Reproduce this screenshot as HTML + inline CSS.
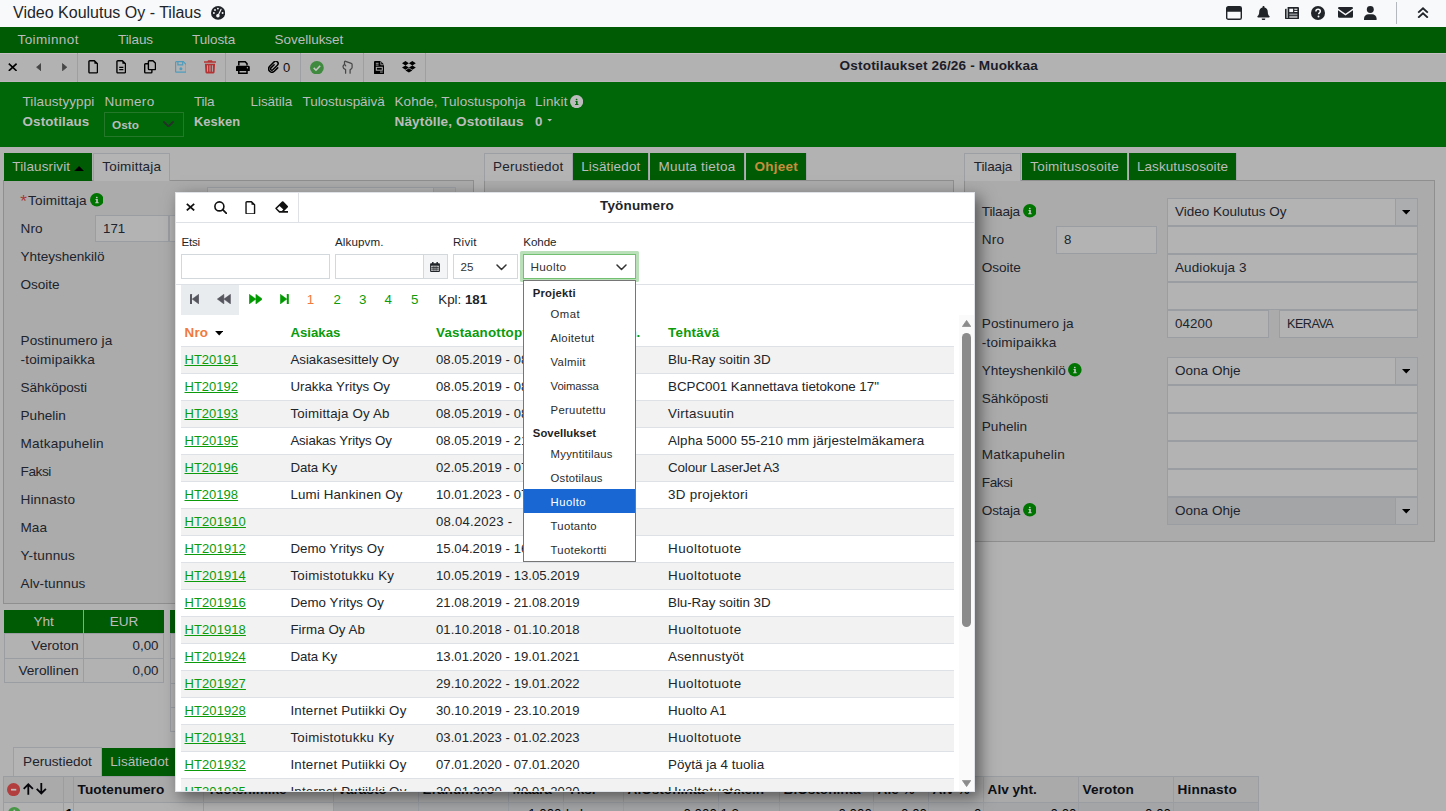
<!DOCTYPE html>
<html lang="fi"><head><meta charset="utf-8"><title>Video Koulutus Oy - Tilaus</title>
<style>
html,body{margin:0;padding:0}
body{width:1446px;height:811px;overflow:hidden;position:relative;background:#b2b2b2;font-family:"Liberation Sans",sans-serif;}
.r{position:absolute;box-sizing:border-box;display:block}
.t{position:absolute;white-space:nowrap;line-height:20px;height:20px}
a{color:inherit}
</style></head><body>

<div class="r" style="left:0px;top:0px;width:1446px;height:27px;background:#f8f9fa;"></div>
<div class="t" style="top:3px;font-size:16px;color:#212529;left:13px;">Video Koulutus Oy - Tilaus</div>
<svg class="r" style="left:210.9px;top:5.9px;" width="14.2" height="13.8" viewBox="0 0 14.200 13.800"><ellipse cx="7.100" cy="6.900" rx="7.100" ry="6.900" fill="#212529"/><circle cx="2.900" cy="7" r=".95" fill="#f8f9fa"/><circle cx="4" cy="4" r=".95" fill="#f8f9fa"/><circle cx="6.900" cy="2.600" r=".95" fill="#f8f9fa"/><circle cx="11.600" cy="7" r=".95" fill="#f8f9fa"/><path d="M10 3.400 L7.100 9.400" stroke="#f8f9fa" stroke-width="1.200" stroke-linecap="round"/><circle cx="6.900" cy="9.700" r="1.750" fill="#f8f9fa"/></svg>
<svg class="r" style="left:1226px;top:6px;" width="16" height="14" viewBox="0 0 16 14"><rect x=".7" y=".7" width="14.6" height="12.6" rx="1.6" fill="none" stroke="#212529" stroke-width="1.4"/><path d="M.7 2.2 a1.5 1.5 0 0 1 1.5 -1.5 h11.6 a1.5 1.5 0 0 1 1.5 1.5 v3.6 h-14.6 z" fill="#212529"/></svg>
<svg class="r" style="left:1256.5px;top:5.6px;" width="13" height="14.4" viewBox="0 0 13 14.4"><path d="M6.5 0 c.6 0 1 .4 1 1 v.5 c2 .5 3.300 2.200 3.300 4.400 c0 2.300 .7 3.300 1.600 4.200 c.5 .5 .2 1.400 -.6 1.400 h-10.6 c-.8 0 -1.100 -.9 -.6 -1.400 c.9 -.9 1.600 -1.900 1.600 -4.200 c0 -2.200 1.300 -3.900 3.300 -4.400 v-.5 c0 -.6 .4 -1 1 -1 z M4.700 12.500 h3.600 a1.800 1.800 0 0 1 -3.600 0 z" fill="#212529"/></svg>
<svg class="r" style="left:1285px;top:6.6px;" width="14" height="12.4" viewBox="0 0 14 12.4"><path d="M2.600 0 h10.400 a1 1 0 0 1 1 1 v10.200 a1.200 1.200 0 0 1 -1.200 1.200 h-11.300 a1.500 1.500 0 0 1 -1.500 -1.500 v-8.400 a.8 .8 0 0 1 .8 -.8 h.8 v8.900 a.5 .5 0 0 0 1 0 z" fill="#212529"/><rect x="4.300" y="1.700" width="3.800" height="3.400" fill="#f8f9fa"/><rect x="9.300" y="1.700" width="3.100" height="1.100" fill="#f8f9fa"/><rect x="9.300" y="3.900" width="3.100" height="1.100" fill="#f8f9fa"/><rect x="4.300" y="6.500" width="8.100" height="1.800" fill="#8a8d90"/><rect x="4.300" y="9.400" width="8.100" height="1.200" fill="#f8f9fa"/></svg>
<svg class="r" style="left:1311.3px;top:5.8px;" width="14" height="14" viewBox="0 0 14 14"><circle cx="7" cy="7" r="7" fill="#212529"/><path d="M4.900 5.400 c0 -1.300 1 -2.100 2.200 -2.100 c1.300 0 2.200 .8 2.200 1.900 c0 1.700 -1.700 1.700 -1.700 3.100" fill="none" stroke="#f8f9fa" stroke-width="1.500"/><circle cx="7.500" cy="10.400" r="1" fill="#f8f9fa"/></svg>
<svg class="r" style="left:1337.6px;top:7.4px;" width="15" height="10.8" viewBox="0 0 15 10.8"><path d="M1.200 0 h12.600 a1.200 1.200 0 0 1 1.200 1.200 v.4 l-7.500 5.200 l-7.500 -5.200 v-.4 a1.200 1.200 0 0 1 1.200 -1.200 z M0 3.200 l7.500 5.200 l7.500 -5.200 v6.400 a1.200 1.200 0 0 1 -1.200 1.200 h-12.600 a1.200 1.200 0 0 1 -1.200 -1.200 z" fill="#212529"/></svg>
<svg class="r" style="left:1364.4px;top:5.8px;" width="12.6" height="14.2" viewBox="0 0 12.600 14.200"><circle cx="6.300" cy="3.500" r="3.500" fill="#212529"/><path d="M0 14.200 v-1.600 c0 -2.700 2.100 -4.400 4.500 -4.400 h3.600 c2.400 0 4.500 1.700 4.500 4.400 v1.600 z" fill="#212529"/></svg>
<div class="r" style="left:1396px;top:2px;width:1px;height:22px;background:#b5b9bd;"></div>
<svg class="r" style="left:1416.5px;top:6.6px;" width="12" height="11.8" viewBox="0 0 12 11.800"><path d="M1.200 5.700 L6 1.300 L10.800 5.700 M1.200 10.700 L6 6.300 L10.800 10.700" fill="none" stroke="#212529" stroke-width="1.800" stroke-linejoin="miter"/></svg>
<div class="r" style="left:0px;top:27px;width:1446px;height:26px;background:#005b05;"></div>
<div class="t" style="top:30px;font-size:13.5px;color:#bcbcbc;letter-spacing:0.392px;left:17.5px;">Toiminnot</div>
<div class="t" style="top:30px;font-size:13.5px;color:#bcbcbc;letter-spacing:-0.085px;left:118px;">Tilaus</div>
<div class="t" style="top:30px;font-size:13.5px;color:#bcbcbc;letter-spacing:-0.081px;left:192px;">Tulosta</div>
<div class="t" style="top:30px;font-size:13.5px;color:#bcbcbc;letter-spacing:-0.021px;left:274.5px;">Sovellukset</div>
<div class="r" style="left:0px;top:53px;width:1446px;height:29px;background:#b2b2b2;"></div>
<div class="r" style="left:0px;top:53px;width:1446px;height:1px;background:#c5bec3;"></div>
<div class="r" style="left:0px;top:81px;width:1446px;height:1px;background:#bab6ba;"></div>
<div class="r" style="left:77px;top:53px;width:1px;height:29px;background:#9c9fa3;"></div>
<div class="r" style="left:225px;top:53px;width:1px;height:29px;background:#9c9fa3;"></div>
<div class="r" style="left:300px;top:53px;width:1px;height:29px;background:#9c9fa3;"></div>
<div class="r" style="left:363px;top:53px;width:1px;height:29px;background:#9c9fa3;"></div>
<div class="r" style="left:425px;top:53px;width:1px;height:29px;background:#9c9fa3;"></div>
<svg class="r" style="left:8px;top:62.7px;" width="9.4" height="8.6" viewBox="0 0 9.400 8.600"><path d="M.8 .7 L8.600 7.900 M8.600 .7 L.8 7.900" stroke="#000" stroke-width="1.600" fill="none"/></svg>
<svg class="r" style="left:35.8px;top:62.9px;" width="5.4" height="8.4" viewBox="0 0 5.400 8.400"><path d="M5 .6 v7.200 l-4.400 -3.600 z" fill="#464646" stroke="#464646" stroke-width=".8" stroke-linejoin="round"/></svg>
<svg class="r" style="left:62.4px;top:62.9px;" width="5.4" height="8.4" viewBox="0 0 5.400 8.400"><path d="M.4 .6 v7.200 l4.400 -3.600 z" fill="#464646" stroke="#464646" stroke-width=".8" stroke-linejoin="round"/></svg>
<svg class="r" style="left:87.8px;top:60.3px;" width="10.4" height="13.6" viewBox="0 0 10 13.700"><path d="M1.6 .7 h4.6 l3.1 3.1 v8.3 a.9 .9 0 0 1 -.9 .9 h-6.8 a.9 .9 0 0 1 -.9 -.9 v-10.5 a.9 .9 0 0 1 .9 -.9 z" fill="none" stroke="#000" stroke-width="1.4" stroke-linejoin="round"/><path d="M6.2 .7 v3.1 h3.1 z" fill="#000"/></svg>
<svg class="r" style="left:115.9px;top:60.3px;" width="10.4" height="13.6" viewBox="0 0 10 13.700"><path d="M1.6 .7 h4.6 l3.1 3.1 v8.3 a.9 .9 0 0 1 -.9 .9 h-6.8 a.9 .9 0 0 1 -.9 -.9 v-10.5 a.9 .9 0 0 1 .9 -.9 z" fill="none" stroke="#000" stroke-width="1.4" stroke-linejoin="round"/><path d="M6.2 .7 v3.1 h3.1 z" fill="#000"/><path d="M3 7.4 h4.2 M3 9.8 h4.2" stroke="#000" stroke-width="1.3"/></svg>
<svg class="r" style="left:144px;top:60.3px;" width="12.2" height="13.6" viewBox="0 0 12.200 13.600"><path d="M5.200 .7 h3.800 l2.500 2.500 v5.600 a.8 .8 0 0 1 -.8 .8 h-5.500 a.8 .8 0 0 1 -.8 -.8 v-7.300 a.8 .8 0 0 1 .8 -.8 z" fill="none" stroke="#000" stroke-width="1.400" stroke-linejoin="round"/><path d="M4.300 3.800 h-2.800 a.8 .8 0 0 0 -.8 .8 v7.500 a.8 .8 0 0 0 .8 .8 h5.600 a.8 .8 0 0 0 .8 -.8 v-2.400" fill="none" stroke="#000" stroke-width="1.400" stroke-linejoin="round"/></svg>
<svg class="r" style="left:174.5px;top:61px;" width="11.8" height="11.8" viewBox="0 0 11.800 11.800"><path d="M1.400 .6 h6.900 l2.900 2.900 v6.900 a.8 .8 0 0 1 -.8 .8 h-9 a.8 .8 0 0 1 -.8 -.8 v-9 a.8 .8 0 0 1 .8 -.8 z" fill="none" stroke="#4f9cbd" stroke-width="1.200"/><path d="M2.900 .8 v3 h4.800 v-3" fill="none" stroke="#4f9cbd" stroke-width="1.200"/><circle cx="5.900" cy="7.700" r="1.500" fill="#4f9cbd"/></svg>
<svg class="r" style="left:204px;top:60.3px;" width="12" height="13.6" viewBox="0 0 11.800 13"><path d="M4 0 h3.800 l.6 1 h3 a.4 .4 0 0 1 .4 .4 v.8 a.4 .4 0 0 1 -.4 .4 h-11 a.4 .4 0 0 1 -.4 -.4 v-.8 a.4 .4 0 0 1 .4 -.4 h3 z" fill="#b63333"/><path d="M.9 3.400 h10 l-.5 8.500 a1.200 1.200 0 0 1 -1.200 1.100 h-6.600 a1.200 1.200 0 0 1 -1.200 -1.100 z" fill="#b63333"/><path d="M3.500 5 v6.300 M5.900 5 v6.300 M8.300 5 v6.300" stroke="#b2b2b2" stroke-width=".9"/></svg>
<svg class="r" style="left:236px;top:60.5px;" width="13.8" height="13" viewBox="0 0 13.800 13"><path d="M2.800 4.600 v-3.800 h6.400 l1.800 1.800 v2" fill="none" stroke="#000" stroke-width="1.500"/><path d="M1.400 4.800 h11 a1.400 1.400 0 0 1 1.400 1.400 v3.300 a.5 .5 0 0 1 -.5 .5 h-12.800 a.5 .5 0 0 1 -.5 -.5 v-3.300 a1.400 1.400 0 0 1 1.400 -1.400 z" fill="#000"/><path d="M2.800 9 v3.300 h8.200 v-3.300" fill="none" stroke="#000" stroke-width="1.500"/><circle cx="11.400" cy="6.700" r=".7" fill="#b2b2b2"/></svg>
<svg class="r" style="left:267.8px;top:61px;" width="11.6" height="12.4" viewBox="0 0 11.600 12.400"><path d="M6.100 3.700 L2.900 6.900 a1.300 1.300 0 0 0 1.900 1.900 L9.400 4.200 a2.300 2.300 0 0 0 -3.300 -3.300 L1.500 5.500 a3.400 3.400 0 0 0 4.800 4.800 L9.700 6.900" fill="none" stroke="#000" stroke-width="1.500" stroke-linecap="round"/></svg>
<div class="t" style="top:58px;font-size:13px;color:#101010;left:283px;">0</div>
<svg class="r" style="left:310px;top:60.5px;" width="13.8" height="13.4" viewBox="0 0 13.800 13.400"><ellipse cx="6.900" cy="6.700" rx="6.900" ry="6.700" fill="#3f8a3f"/><path d="M3.700 6.900 L6 9.200 L10.200 4.700" fill="none" stroke="#c6c6c6" stroke-width="1.600"/></svg>
<svg class="r" style="left:342px;top:60px;" width="11" height="14" viewBox="342 60 11 14"><path d="M345.600 73.200 V69.700 C344.400 69.200 343 68.300 343 66.800 C343 65.600 343.800 65 344.500 64.400 V61.900 C344.500 61.300 345 61.100 345.600 61.300 L351.300 63.400 C351.900 63.600 352.100 64 352.100 64.600 V67.500 C352.100 68.600 351 69.200 350.100 69.800 V73.200 M344.500 64.400 C345 64.900 345.500 65.300 345.700 65.900" fill="none" stroke="#484848" stroke-width="1.250" stroke-linecap="round" stroke-linejoin="round"/></svg>
<svg class="r" style="left:373.6px;top:60.6px;" width="10.6" height="13.2" viewBox="0 0 10.600 13.200"><path d="M1 0 h5.600 l4 4 v8.200 a1 1 0 0 1 -1 1 h-8.600 a1 1 0 0 1 -1 -1 v-11.200 a1 1 0 0 1 1 -1 z" fill="#000"/><path d="M6.800 .4 v3.400 h3.400" fill="none" stroke="#b2b2b2" stroke-width=".8"/><rect x="1.800" y="1.800" width="2.800" height=".9" fill="#b2b2b2"/><rect x="1.800" y="3.600" width="2.800" height=".9" fill="#b2b2b2"/><rect x="2.300" y="6.300" width="6" height="2.900" fill="none" stroke="#b2b2b2" stroke-width="1"/><rect x="6" y="10.600" width="2.800" height=".9" fill="#b2b2b2"/></svg>
<svg class="r" style="left:402px;top:61.4px;" width="13.8" height="11.4" viewBox="0 0 13.800 11.400"><path d="M3.450 0 L6.900 2.200 L3.450 4.400 L0 2.200 z M10.350 0 L13.800 2.200 L10.350 4.400 L6.900 2.200 z M3.450 4.400 L6.900 6.600 L3.450 8.800 L0 6.600 z M10.350 4.400 L13.800 6.600 L10.350 8.800 L6.900 6.600 z M3.450 9.500 L6.900 7.300 L10.350 9.500 L6.900 11.400 z" fill="#000"/></svg>
<div class="t" style="top:56px;font-size:13.6px;color:#1c1c28;font-weight:700;letter-spacing:0.143px;left:839.6px;">Ostotilaukset 26/26 - Muokkaa</div>
<div class="r" style="left:0px;top:82px;width:1446px;height:65px;background:#006708;"></div>
<div class="t" style="top:92px;font-size:13.5px;color:#bcbcbc;letter-spacing:0.094px;left:22.5px;">Tilaustyyppi</div>
<div class="t" style="top:92px;font-size:13.5px;color:#bcbcbc;letter-spacing:0.331px;left:104.5px;">Numero</div>
<div class="t" style="top:92px;font-size:13.5px;color:#bcbcbc;letter-spacing:-0.213px;left:194px;">Tila</div>
<div class="t" style="top:92px;font-size:13.5px;color:#bcbcbc;letter-spacing:-0.053px;left:250.5px;">Lisätila</div>
<div class="t" style="top:92px;font-size:13.5px;color:#bcbcbc;letter-spacing:-0.045px;left:302.5px;">Tulostuspäivä</div>
<div class="t" style="top:92px;font-size:13.5px;color:#bcbcbc;letter-spacing:0.058px;left:394.5px;">Kohde, Tulostuspohja</div>
<div class="t" style="top:92px;font-size:13.5px;color:#bcbcbc;letter-spacing:0.198px;left:535px;">Linkit</div>
<svg class="r" style="left:570.2px;top:94.8px;" width="13.2" height="13.2" viewBox="0 0 13 13"><circle cx="6.500" cy="6.500" r="6.500" fill="#bcbcbc"/><rect x="5.700" y="3.700" width="1.600" height="1.400" rx=".5" fill="#006708"/><path d="M5.300 5.800 h2.200 v3 h.8 v1 h-3.300 v-1 h.9 v-2 h-.6 z" fill="#006708"/></svg>
<div class="t" style="top:112px;font-size:13.4px;color:#bcbcbc;font-weight:700;letter-spacing:0.148px;left:22.5px;">Ostotilaus</div>
<div class="t" style="top:112px;font-size:12.9px;color:#bcbcbc;font-weight:700;letter-spacing:0.051px;left:194px;">Kesken</div>
<div class="t" style="top:112px;font-size:13.6px;color:#bcbcbc;font-weight:700;letter-spacing:0.112px;left:394.5px;">Näytölle, Ostotilaus</div>
<div class="t" style="top:112px;font-size:13.4px;color:#bcbcbc;font-weight:700;left:535px;">0</div>
<svg class="r" style="left:546.6px;top:119.3px;" width="5.4" height="2.6" viewBox="0 0 8 4.300"><path d="M0 0 h8 l-4 4.3 z" fill="#bcbcbc"/></svg>
<div class="r" style="left:104px;top:112px;width:80px;height:25px;border:1px solid #25782a;"></div>
<div class="t" style="top:115px;font-size:11.8px;color:#bcbcbc;font-weight:700;left:112px;">Osto</div>
<svg class="r" style="left:162.6px;top:120.8px;" width="11" height="6.5" viewBox="0 0 11 6.500"><path d="M1 1 L5.5 5.5 L10 1" fill="none" stroke="#26302a" stroke-width="1.8" stroke-linecap="round" stroke-linejoin="round"/></svg>
<div class="r" style="left:3px;top:180px;width:471px;height:424px;background:#ababab;border:1px solid #8f8f8f;"></div>
<div class="r" style="left:484px;top:180px;width:470px;height:450px;background:#ababab;border:1px solid #8f8f8f;"></div>
<div class="r" style="left:964px;top:180px;width:471px;height:362px;background:#ababab;border:1px solid #8f8f8f;"></div>
<div class="r" style="left:4px;top:153px;width:88px;height:27.5px;background:#005b05;"></div>
<div class="t" style="top:157px;font-size:13.5px;color:#bcbcbc;letter-spacing:0.127px;left:12.3px;">Tilausrivit</div>
<svg class="r" style="left:74px;top:166px;" width="10.2" height="5.2" viewBox="0 0 10.200 5.200"><path d="M0 5.200 h10.200 l-5.100 -5.200 z" fill="#000"/></svg>
<div class="r" style="left:93px;top:152.5px;width:77px;height:28.5px;background:#b4b4b4;border:1px solid #9c9fa3;border-bottom:none;"></div>
<div class="t" style="top:157px;font-size:13.5px;color:#20232c;letter-spacing:0.188px;left:102.3px;">Toimittaja</div>
<div class="r" style="left:484px;top:152.5px;width:89px;height:28.5px;background:#b4b4b4;border:1px solid #9c9fa3;border-bottom:none;"></div>
<div class="t" style="top:157px;font-size:13.5px;color:#20232c;letter-spacing:0.183px;left:493.1px;">Perustiedot</div>
<div class="r" style="left:573.3px;top:153px;width:74.70000000000005px;height:27px;background:#005b05;"></div>
<div class="r" style="left:648px;top:153px;width:1px;height:27px;background:#a3a3a8;"></div>
<div class="t" style="top:157px;font-size:13.5px;color:#bcbcbc;letter-spacing:0.151px;left:581.2px;">Lisätiedot</div>
<div class="r" style="left:650px;top:153px;width:94px;height:27px;background:#005b05;"></div>
<div class="r" style="left:744px;top:153px;width:1px;height:27px;background:#a3a3a8;"></div>
<div class="t" style="top:157px;font-size:13.5px;color:#bcbcbc;letter-spacing:0.242px;left:658.4px;">Muuta tietoa</div>
<div class="r" style="left:746px;top:153px;width:60px;height:27px;background:#005b05;"></div>
<div class="r" style="left:806px;top:153px;width:1px;height:27px;background:#a3a3a8;"></div>
<div class="t" style="top:157px;font-size:13.5px;color:#c88e3c;font-weight:700;letter-spacing:0.232px;left:754.5px;">Ohjeet</div>
<div class="r" style="left:964px;top:152.5px;width:56.5px;height:28.5px;background:#b4b4b4;border:1px solid #9c9fa3;border-bottom:none;"></div>
<div class="t" style="top:157px;font-size:13.5px;color:#20232c;letter-spacing:-0.124px;left:973.8px;">Tilaaja</div>
<div class="r" style="left:1022.2px;top:153px;width:105.0px;height:27px;background:#005b05;"></div>
<div class="r" style="left:1127px;top:153px;width:1px;height:27px;background:#a3a3a8;"></div>
<div class="t" style="top:157px;font-size:13.5px;color:#bcbcbc;letter-spacing:0.226px;left:1030.2px;">Toimitusosoite</div>
<div class="r" style="left:1129px;top:153px;width:107.40000000000009px;height:27px;background:#005b05;"></div>
<div class="r" style="left:1236px;top:153px;width:1px;height:27px;background:#a3a3a8;"></div>
<div class="t" style="top:157px;font-size:13.5px;color:#bcbcbc;letter-spacing:0.082px;left:1136.9px;">Laskutusosoite</div>
<div class="t" style="top:192px;font-size:17px;color:#a83a3a;left:20.3px;">*</div>
<div class="t" style="top:191px;font-size:13.6px;color:#20232c;letter-spacing:0.135px;left:28px;">Toimittaja</div>
<svg class="r" style="left:89.6px;top:193.4px;" width="13.6" height="13.6" viewBox="0 0 13 13"><circle cx="6.500" cy="6.500" r="6.500" fill="#007400"/><rect x="5.700" y="3.700" width="1.600" height="1.400" rx=".5" fill="#bfc8bf"/><path d="M5.300 5.800 h2.200 v3 h.8 v1 h-3.300 v-1 h.9 v-2 h-.6 z" fill="#bfc8bf"/></svg>
<div class="r" style="left:207px;top:186.6px;width:249px;height:27px;background:#b3b3b3;border:1px solid #9a9ea2;"></div>
<div class="r" style="left:433px;top:186.6px;width:23px;height:27px;background:#a9a9a9;border:1px solid #9a9ea2;"></div>
<div class="t" style="top:219px;font-size:13.6px;color:#20232c;letter-spacing:0.128px;left:20.5px;">Nro</div>
<div class="t" style="top:247px;font-size:13.6px;color:#20232c;letter-spacing:-0.052px;left:20.5px;">Yhteyshenkilö</div>
<div class="t" style="top:275px;font-size:13.6px;color:#20232c;letter-spacing:-0.068px;left:20.5px;">Osoite</div>
<div class="t" style="top:331px;font-size:13.6px;color:#20232c;letter-spacing:0.085px;left:20.5px;">Postinumero ja</div>
<div class="t" style="top:350px;font-size:13.6px;color:#20232c;letter-spacing:0.17px;left:20.5px;">-toimipaikka</div>
<div class="t" style="top:378px;font-size:13.6px;color:#20232c;letter-spacing:-0.079px;left:20.5px;">Sähköposti</div>
<div class="t" style="top:406px;font-size:13.6px;color:#20232c;left:20.5px;">Puhelin</div>
<div class="t" style="top:434px;font-size:13.6px;color:#20232c;letter-spacing:0.192px;left:20.5px;">Matkapuhelin</div>
<div class="t" style="top:462px;font-size:13.6px;color:#20232c;letter-spacing:-0.399px;left:20.5px;">Faksi</div>
<div class="t" style="top:490px;font-size:13.6px;color:#20232c;letter-spacing:0.115px;left:20.5px;">Hinnasto</div>
<div class="t" style="top:518px;font-size:13.6px;color:#20232c;letter-spacing:0.048px;left:20.5px;">Maa</div>
<div class="t" style="top:546px;font-size:13.6px;color:#20232c;letter-spacing:0.177px;left:20.5px;">Y-tunnus</div>
<div class="t" style="top:574px;font-size:13.6px;color:#20232c;letter-spacing:0.064px;left:20.5px;">Alv-tunnus</div>
<div class="r" style="left:95px;top:214.5px;width:73.5px;height:27px;background:#b3b3b3;border:1px solid #9a9ea2;"></div>
<div class="t" style="top:219px;font-size:13.3px;color:#20232c;left:103px;">171</div>
<div class="r" style="left:168.5px;top:214.5px;width:40px;height:27px;background:#b3b3b3;border:1px solid #9a9ea2;"></div>
<div class="r" style="left:3.6px;top:609.7px;width:80.4px;height:24px;background:#005b05;border-right:1px solid #9a9ea2;"></div>
<div class="r" style="left:84px;top:609.7px;width:80px;height:24px;background:#005b05;"></div>
<div class="t" style="top:612px;font-size:13.6px;color:#bcbcbc;left:-256.4px;width:600px;text-align:center;">Yht</div>
<div class="t" style="top:612px;font-size:13.6px;color:#bcbcbc;left:-176px;width:600px;text-align:center;">EUR</div>
<div class="r" style="left:3.6px;top:633px;width:80.8px;height:25.5px;border:1px solid #9a9ea2;"></div>
<div class="r" style="left:83.4px;top:633px;width:80.6px;height:25.5px;border:1px solid #9a9ea2;"></div>
<div class="r" style="left:3.6px;top:657.5px;width:80.8px;height:25.3px;border:1px solid #9a9ea2;"></div>
<div class="r" style="left:83.4px;top:657.5px;width:80.6px;height:25.3px;border:1px solid #9a9ea2;"></div>
<div class="t" style="top:636px;font-size:13.7px;color:#20232c;left:0;width:78.5px;text-align:right;">Veroton</div>
<div class="t" style="top:661px;font-size:13.7px;color:#20232c;left:0;width:78.5px;text-align:right;">Verollinen</div>
<div class="t" style="top:636px;font-size:13.3px;color:#20232c;left:0;width:158.5px;text-align:right;">0,00</div>
<div class="t" style="top:661px;font-size:13.3px;color:#20232c;left:0;width:158.5px;text-align:right;">0,00</div>
<div class="r" style="left:169.6px;top:609.7px;width:300px;height:24px;background:#005b05;"></div>
<div class="r" style="left:169.6px;top:633px;width:300px;height:25.8px;border:1px solid #9a9ea2;"></div>
<div class="r" style="left:169.6px;top:658px;width:300px;height:25.500000000000046px;border:1px solid #9a9ea2;"></div>
<div class="r" style="left:169.6px;top:682.7px;width:300px;height:25.499999999999932px;border:1px solid #9a9ea2;"></div>
<div class="r" style="left:169.6px;top:707.4px;width:300px;height:25.000000000000046px;border:1px solid #9a9ea2;"></div>
<div class="r" style="left:13px;top:747px;width:89px;height:30px;background:#b4b4b4;border:1px solid #9c9fa3;border-bottom:none;"></div>
<div class="t" style="top:752px;font-size:13.6px;color:#20232c;left:-242.5px;width:600px;text-align:center;">Perustiedot</div>
<div class="r" style="left:102px;top:748.3px;width:90px;height:28px;background:#005b05;"></div>
<div class="t" style="top:752px;font-size:13.6px;color:#bcbcbc;left:110.3px;">Lisätiedot</div>
<div class="r" style="left:3px;top:776px;width:61px;height:27px;background:#aaaaaa;border:1px solid #9a9ea2;"></div>
<div class="r" style="left:3px;top:802px;width:61px;height:27px;background:#b2b2b2;border:1px solid #9a9ea2;"></div>
<div class="r" style="left:63px;top:776px;width:11px;height:27px;background:#aaaaaa;border:1px solid #9a9ea2;"></div>
<div class="r" style="left:63px;top:802px;width:11px;height:27px;background:#b2b2b2;border:1px solid #9a9ea2;"></div>
<div class="r" style="left:73px;top:776px;width:131px;height:27px;background:#aaaaaa;border:1px solid #9a9ea2;"></div>
<div class="r" style="left:73px;top:802px;width:131px;height:27px;background:#b2b2b2;border:1px solid #9a9ea2;"></div>
<div class="t" style="top:780px;font-size:13.6px;color:#0c0e14;font-weight:700;letter-spacing:0.084px;left:77.6px;">Tuotenumero</div>
<div class="r" style="left:203px;top:776px;width:131px;height:27px;background:#aaaaaa;border:1px solid #9a9ea2;"></div>
<div class="r" style="left:203px;top:802px;width:131px;height:27px;background:#b2b2b2;border:1px solid #9a9ea2;"></div>
<div class="t" style="top:780px;font-size:13.6px;color:#0c0e14;font-weight:700;left:207.6px;">Tuotenimike</div>
<div class="r" style="left:333px;top:776px;width:86px;height:27px;background:#aaaaaa;border:1px solid #9a9ea2;"></div>
<div class="r" style="left:333px;top:802px;width:86px;height:27px;background:#a3a5a7;border:1px solid #9a9ea2;"></div>
<div class="t" style="top:780px;font-size:13.6px;color:#0c0e14;font-weight:700;left:337.6px;">Varasto</div>
<div class="r" style="left:418px;top:776px;width:91px;height:27px;background:#aaaaaa;border:1px solid #9a9ea2;"></div>
<div class="r" style="left:418px;top:802px;width:91px;height:27px;background:#a3a5a7;border:1px solid #9a9ea2;"></div>
<div class="t" style="top:780px;font-size:13.6px;color:#0c0e14;font-weight:700;left:422.6px;">Eränumero</div>
<div class="r" style="left:508px;top:776px;width:56px;height:27px;background:#aaaaaa;border:1px solid #9a9ea2;"></div>
<div class="r" style="left:508px;top:802px;width:56px;height:27px;background:#a3a5a7;border:1px solid #9a9ea2;"></div>
<div class="t" style="top:780px;font-size:13.6px;color:#0c0e14;font-weight:700;left:512.6px;">Määrä</div>
<div class="r" style="left:563px;top:776px;width:61px;height:27px;background:#aaaaaa;border:1px solid #9a9ea2;"></div>
<div class="r" style="left:563px;top:802px;width:61px;height:27px;background:#a3a5a7;border:1px solid #9a9ea2;"></div>
<div class="t" style="top:780px;font-size:13.6px;color:#0c0e14;font-weight:700;left:567.6px;">Yks.</div>
<div class="r" style="left:623px;top:776px;width:96px;height:27px;background:#aaaaaa;border:1px solid #9a9ea2;"></div>
<div class="r" style="left:623px;top:802px;width:96px;height:27px;background:#a3a5a7;border:1px solid #9a9ea2;"></div>
<div class="t" style="top:780px;font-size:13.6px;color:#0c0e14;font-weight:700;left:627.6px;">A.Ostohinta</div>
<div class="r" style="left:718px;top:776px;width:62px;height:27px;background:#aaaaaa;border:1px solid #9a9ea2;"></div>
<div class="r" style="left:718px;top:802px;width:62px;height:27px;background:#a3a5a7;border:1px solid #9a9ea2;"></div>
<div class="t" style="top:780px;font-size:13.6px;color:#0c0e14;font-weight:700;left:722.6px;">Oikein</div>
<div class="r" style="left:779px;top:776px;width:95px;height:27px;background:#aaaaaa;border:1px solid #9a9ea2;"></div>
<div class="r" style="left:779px;top:802px;width:95px;height:27px;background:#a3a5a7;border:1px solid #9a9ea2;"></div>
<div class="t" style="top:780px;font-size:13.6px;color:#0c0e14;font-weight:700;left:783.6px;">B.Ostohinta</div>
<div class="r" style="left:873px;top:776px;width:56px;height:27px;background:#aaaaaa;border:1px solid #9a9ea2;"></div>
<div class="r" style="left:873px;top:802px;width:56px;height:27px;background:#a3a5a7;border:1px solid #9a9ea2;"></div>
<div class="t" style="top:780px;font-size:13.6px;color:#0c0e14;font-weight:700;left:877.6px;">Ale %</div>
<div class="r" style="left:928px;top:776px;width:56px;height:27px;background:#aaaaaa;border:1px solid #9a9ea2;"></div>
<div class="r" style="left:928px;top:802px;width:56px;height:27px;background:#a3a5a7;border:1px solid #9a9ea2;"></div>
<div class="t" style="top:780px;font-size:13.6px;color:#0c0e14;font-weight:700;left:932.6px;">Alv %</div>
<div class="r" style="left:983px;top:776px;width:96px;height:27px;background:#aaaaaa;border:1px solid #9a9ea2;"></div>
<div class="r" style="left:983px;top:802px;width:96px;height:27px;background:#a3a5a7;border:1px solid #9a9ea2;"></div>
<div class="t" style="top:780px;font-size:13.6px;color:#0c0e14;font-weight:700;left:987.6px;">Alv yht.</div>
<div class="r" style="left:1078px;top:776px;width:96px;height:27px;background:#aaaaaa;border:1px solid #9a9ea2;"></div>
<div class="r" style="left:1078px;top:802px;width:96px;height:27px;background:#a3a5a7;border:1px solid #9a9ea2;"></div>
<div class="t" style="top:780px;font-size:13.6px;color:#0c0e14;font-weight:700;letter-spacing:0.081px;left:1082.6px;">Veroton</div>
<div class="r" style="left:1173px;top:776px;width:86px;height:27px;background:#aaaaaa;border:1px solid #9a9ea2;"></div>
<div class="r" style="left:1173px;top:802px;width:86px;height:27px;background:#a3a5a7;border:1px solid #9a9ea2;"></div>
<div class="t" style="top:780px;font-size:13.6px;color:#0c0e14;font-weight:700;letter-spacing:0.14px;left:1177.6px;">Hinnasto</div>
<svg class="r" style="left:6.9px;top:782.5px;" width="13.1" height="13.1" viewBox="0 0 13 13"><circle cx="6.500" cy="6.500" r="6.500" fill="#b23e3e"/><rect x="4" y="5.800" width="5.200" height="1.700" fill="#bebebe"/></svg>
<svg class="r" style="left:23px;top:783px;" width="10.6" height="11.8" viewBox="0 0 10.600 11.800"><path d="M5.300 11.800 V1.400 M.7 5.900 L5.300 1.300 L9.900 5.900" fill="none" stroke="#05050a" stroke-width="1.800"/></svg>
<svg class="r" style="left:36px;top:783px;" width="10.6" height="11.8" viewBox="0 0 10.600 11.800"><path d="M5.300 0 V10.400 M.7 5.900 L5.300 10.500 L9.900 5.900" fill="none" stroke="#05050a" stroke-width="1.800"/></svg>
<svg class="r" style="left:8.2px;top:806.6px;" width="12.6" height="12.6" viewBox="0 0 13 13"><circle cx="6.500" cy="6.500" r="6.500" fill="#469646"/><path d="M6.500 2.800 v7.400 M2.800 6.500 h7.400" stroke="#c2c2c2" stroke-width="1.700"/></svg>
<div class="t" style="top:804px;font-size:13.3px;color:#000;font-weight:700;left:65.6px;">1</div>
<div class="t" style="top:804px;font-size:13.3px;color:#000;left:0;width:561.5px;text-align:right;">1,000</div>
<div class="t" style="top:804px;font-size:13.3px;color:#000;left:0;width:716.8px;text-align:right;">0,000</div>
<div class="t" style="top:804px;font-size:13.3px;color:#000;left:0;width:871.8px;text-align:right;">0,000</div>
<div class="t" style="top:804px;font-size:13.3px;color:#000;left:0;width:927px;text-align:right;">0,00</div>
<div class="t" style="top:804px;font-size:13.3px;color:#000;left:0;width:981.5px;text-align:right;">0</div>
<div class="t" style="top:804px;font-size:13.3px;color:#000;left:0;width:1076.5px;text-align:right;">0,00</div>
<div class="t" style="top:804px;font-size:13.3px;color:#000;left:0;width:1171px;text-align:right;">0,00</div>
<div class="t" style="top:804px;font-size:13.3px;color:#000;left:566px;">kpl</div>
<div class="t" style="top:804px;font-size:13.3px;color:#000;left:720.5px;">1,2</div>
<div class="t" style="top:202px;font-size:13.6px;color:#20232c;letter-spacing:-0.194px;left:981.8px;">Tilaaja</div>
<div class="t" style="top:230px;font-size:13.6px;color:#20232c;letter-spacing:0.128px;left:981.8px;">Nro</div>
<div class="t" style="top:258px;font-size:13.6px;color:#20232c;letter-spacing:-0.068px;left:981.8px;">Osoite</div>
<div class="t" style="top:314px;font-size:13.6px;color:#20232c;letter-spacing:0.085px;left:981.8px;">Postinumero ja</div>
<div class="t" style="top:333px;font-size:13.6px;color:#20232c;letter-spacing:0.17px;left:981.8px;">-toimipaikka</div>
<div class="t" style="top:361px;font-size:13.6px;color:#20232c;letter-spacing:-0.052px;left:981.8px;">Yhteyshenkilö</div>
<div class="t" style="top:389px;font-size:13.6px;color:#20232c;letter-spacing:-0.079px;left:981.8px;">Sähköposti</div>
<div class="t" style="top:417px;font-size:13.6px;color:#20232c;left:981.8px;">Puhelin</div>
<div class="t" style="top:445px;font-size:13.6px;color:#20232c;letter-spacing:0.192px;left:981.8px;">Matkapuhelin</div>
<div class="t" style="top:473px;font-size:13.6px;color:#20232c;letter-spacing:-0.399px;left:981.8px;">Faksi</div>
<div class="t" style="top:501px;font-size:13.6px;color:#20232c;letter-spacing:-0.151px;left:981.8px;">Ostaja</div>
<svg class="r" style="left:1022.8px;top:204.2px;" width="13.6" height="13.6" viewBox="0 0 13 13"><circle cx="6.500" cy="6.500" r="6.500" fill="#007400"/><rect x="5.700" y="3.700" width="1.600" height="1.400" rx=".5" fill="#bfc8bf"/><path d="M5.300 5.800 h2.200 v3 h.8 v1 h-3.300 v-1 h.9 v-2 h-.6 z" fill="#bfc8bf"/></svg>
<svg class="r" style="left:1068.4px;top:363.2px;" width="13.6" height="13.6" viewBox="0 0 13 13"><circle cx="6.500" cy="6.500" r="6.500" fill="#007400"/><rect x="5.700" y="3.700" width="1.600" height="1.400" rx=".5" fill="#bfc8bf"/><path d="M5.300 5.800 h2.200 v3 h.8 v1 h-3.300 v-1 h.9 v-2 h-.6 z" fill="#bfc8bf"/></svg>
<svg class="r" style="left:1022.8px;top:503.2px;" width="13.6" height="13.6" viewBox="0 0 13 13"><circle cx="6.500" cy="6.500" r="6.500" fill="#007400"/><rect x="5.700" y="3.700" width="1.600" height="1.400" rx=".5" fill="#bfc8bf"/><path d="M5.300 5.800 h2.200 v3 h.8 v1 h-3.300 v-1 h.9 v-2 h-.6 z" fill="#bfc8bf"/></svg>
<div class="r" style="left:1167px;top:198px;width:251px;height:28px;background:#b3b3b3;border:1px solid #9a9ea2;"></div>
<div class="r" style="left:1395px;top:198px;width:23px;height:28px;background:#acadaf;border:1px solid #9a9ea2;"></div>
<svg class="r" style="left:1402px;top:210px;" width="8.4" height="4.5" viewBox="0 0 8 4.300"><path d="M0 0 h8 l-4 4.3 z" fill="#000"/></svg>
<div class="t" style="top:202px;font-size:13.5px;color:#20232c;left:1175px;">Video Koulutus Oy</div>
<div class="r" style="left:1056px;top:226px;width:101px;height:28px;background:#b3b3b3;border:1px solid #9a9ea2;"></div>
<div class="t" style="top:230px;font-size:13.3px;color:#20232c;left:1064px;">8</div>
<div class="r" style="left:1167px;top:226px;width:251px;height:28px;background:#b3b3b3;border:1px solid #9a9ea2;"></div>
<div class="r" style="left:1167px;top:254px;width:251px;height:28px;background:#b3b3b3;border:1px solid #9a9ea2;"></div>
<div class="t" style="top:258px;font-size:13.5px;color:#20232c;letter-spacing:0.095px;left:1175px;">Audiokuja 3</div>
<div class="r" style="left:1167px;top:282px;width:251px;height:28px;background:#b3b3b3;border:1px solid #9a9ea2;"></div>
<div class="r" style="left:1167px;top:310px;width:102px;height:28px;background:#b3b3b3;border:1px solid #9a9ea2;"></div>
<div class="t" style="top:314px;font-size:13.3px;color:#20232c;letter-spacing:0.123px;left:1175px;">04200</div>
<div class="r" style="left:1279px;top:310px;width:139px;height:28px;background:#b3b3b3;border:1px solid #9a9ea2;"></div>
<div class="t" style="top:314px;font-size:12.6px;color:#20232c;letter-spacing:-0.491px;left:1287px;">KERAVA</div>
<div class="r" style="left:1167px;top:357px;width:251px;height:28px;background:#b3b3b3;border:1px solid #9a9ea2;"></div>
<div class="r" style="left:1395px;top:357px;width:23px;height:28px;background:#acadaf;border:1px solid #9a9ea2;"></div>
<svg class="r" style="left:1402px;top:369px;" width="8.4" height="4.5" viewBox="0 0 8 4.300"><path d="M0 0 h8 l-4 4.3 z" fill="#000"/></svg>
<div class="t" style="top:361px;font-size:13.5px;color:#20232c;letter-spacing:0.023px;left:1175px;">Oona Ohje</div>
<div class="r" style="left:1167px;top:385px;width:251px;height:28px;background:#b3b3b3;border:1px solid #9a9ea2;"></div>
<div class="r" style="left:1167px;top:413px;width:251px;height:28px;background:#b3b3b3;border:1px solid #9a9ea2;"></div>
<div class="r" style="left:1167px;top:441px;width:251px;height:28px;background:#b3b3b3;border:1px solid #9a9ea2;"></div>
<div class="r" style="left:1167px;top:469px;width:251px;height:28px;background:#b3b3b3;border:1px solid #9a9ea2;"></div>
<div class="r" style="left:1167px;top:497px;width:251px;height:28px;background:#a4a5a7;border:1px solid #9a9ea2;"></div>
<div class="r" style="left:1395px;top:497px;width:23px;height:28px;background:#acadaf;border:1px solid #9a9ea2;"></div>
<svg class="r" style="left:1402px;top:509px;" width="8.4" height="4.5" viewBox="0 0 8 4.300"><path d="M0 0 h8 l-4 4.3 z" fill="#000"/></svg>
<div class="t" style="top:501px;font-size:13.5px;color:#20232c;letter-spacing:0.023px;left:1175px;">Oona Ohje</div>
<div class="r" style="left:175px;top:192px;width:800px;height:600px;background:#fff;box-shadow:5px 5px 15px rgba(0,0,0,.5);overflow:hidden;">
<div class="r" style="left:0px;top:30px;width:800px;height:1px;background:#dee2e6;"></div>
<div class="r" style="left:123px;top:0px;width:1px;height:30px;background:#dee2e6;"></div>
<svg class="r" style="left:11.400000000000006px;top:11px;" width="9" height="8.2" viewBox="0 0 9 8.200"><path d="M.8 .8 L8.200 7.400 M8.200 .8 L.8 7.400" stroke="#111" stroke-width="1.800" fill="none"/></svg>
<svg class="r" style="left:38.80000000000001px;top:8.599999999999994px;" width="13.6" height="13.4" viewBox="0 0 13.600 13.400"><circle cx="5.400" cy="5.400" r="4.500" fill="none" stroke="#111" stroke-width="1.600"/><path d="M8.700 8.700 L12.800 12.700" stroke="#111" stroke-width="1.800" stroke-linecap="round"/></svg>
<svg class="r" style="left:70px;top:8.699999999999989px;" width="10.6" height="13.6" viewBox="0 0 10 13.700"><path d="M1.6 .7 h4.6 l3.1 3.1 v8.3 a.9 .9 0 0 1 -.9 .9 h-6.8 a.9 .9 0 0 1 -.9 -.9 v-10.5 a.9 .9 0 0 1 .9 -.9 z" fill="none" stroke="#111" stroke-width="1.4" stroke-linejoin="round"/><path d="M6.2 .7 v3.1 h3.1 z" fill="#111"/></svg>
<svg class="r" style="left:99.80000000000001px;top:9.199999999999989px;" width="13.4" height="11.8" viewBox="0 0 13.400 11.800"><path d="M7 .5 a1 1 0 0 1 1.400 0 l4.400 4.400 a1 1 0 0 1 0 1.400 l-3.700 3.700 h3.900 v1.700 h-8.800 l-3.600 -3.600 a1 1 0 0 1 0 -1.400 z" fill="#111"/><path d="M2 7.400 l2.700 2.700 h2.100 l1.500 -1.500 l-3.700 -3.700 z" fill="#fff"/></svg>
<div class="t" style="top:4px;font-size:13.5px;color:#212529;font-weight:700;letter-spacing:0.166px;left:425px;">Työnumero</div>
<div class="t" style="top:40px;font-size:11.6px;color:#212529;letter-spacing:-0.284px;left:6.5px;">Etsi</div>
<div class="t" style="top:40px;font-size:11.6px;color:#212529;letter-spacing:0.112px;left:160px;">Alkupvm.</div>
<div class="t" style="top:40px;font-size:11.6px;color:#212529;letter-spacing:0.249px;left:278px;">Rivit</div>
<div class="t" style="top:40px;font-size:11.6px;color:#212529;letter-spacing:-0.069px;left:348.29999999999995px;">Kohde</div>
<div class="r" style="left:6px;top:62.400000000000006px;width:148.6px;height:24.4px;background:#fff;border:1px solid #d3d8dd;"></div>
<div class="r" style="left:160px;top:62.400000000000006px;width:89.6px;height:24.4px;background:#fff;border:1px solid #d3d8dd;"></div>
<div class="r" style="left:248px;top:62.400000000000006px;width:24.8px;height:24.4px;background:#f4f5f7;border:1px solid #d3d8dd;"></div>
<svg class="r" style="left:255.2px;top:70px;" width="10" height="10" viewBox="0 0 10.800 11"><path d="M2.200 0 h1.600 v1.300 h3.200 v-1.300 h1.600 v1.300 h1.200 a1 1 0 0 1 1 1 v7.700 a1 1 0 0 1 -1 1 h-8.800 a1 1 0 0 1 -1 -1 v-7.700 a1 1 0 0 1 1 -1 h1.200 z" fill="#212529"/><path d="M1.300 4.100 h8.200 v5.600 h-8.200 z" fill="#fff"/><path d="M1.300 5.950 h8.200 M1.300 7.850 h8.200 M3.350 4.100 v5.600 M5.400 4.100 v5.600 M7.450 4.100 v5.600" stroke="#212529" stroke-width=".9"/></svg>
<div class="r" style="left:278.2px;top:62.400000000000006px;width:64.4px;height:24.4px;background:#fff;border:1px solid #d3d8dd;"></div>
<div class="t" style="top:65px;font-size:11.6px;color:#333;left:285.6px;">25</div>
<svg class="r" style="left:321.4px;top:72px;" width="11" height="6.5" viewBox="0 0 11 6.500"><path d="M1 1 L5.5 5.5 L10 1" fill="none" stroke="#333" stroke-width="1.5" stroke-linecap="round" stroke-linejoin="round"/></svg>
<div class="r" style="left:345.4px;top:59px;width:118.8px;height:30.6px;background:#b9e0b9;border-radius:1.5px;"></div>
<div class="r" style="left:348px;top:62px;width:113.4px;height:25px;background:#fff;border:1px solid #73c073;"></div>
<div class="t" style="top:65px;font-size:11.8px;color:#333;letter-spacing:0.315px;left:355.4px;">Huolto</div>
<svg class="r" style="left:440.6px;top:72px;" width="11" height="6.5" viewBox="0 0 11 6.500"><path d="M1 1 L5.5 5.5 L10 1" fill="none" stroke="#333" stroke-width="1.5" stroke-linecap="round" stroke-linejoin="round"/></svg>
<div class="r" style="left:0px;top:92px;width:800px;height:1px;background:#dee2e6;"></div>
<div class="r" style="left:6.199999999999989px;top:93.19999999999999px;width:57.6px;height:29.4px;background:#e9ecef;"></div>
<svg class="r" style="left:15.400000000000006px;top:102px;" width="8.8" height="10.2" viewBox="0 0 8.800 10.200"><rect x="0" y="0" width="2" height="10.200" rx=".4" fill="#55565e"/><path d="M8.800 .3 v9.600 l-6.600 -4.800 z" fill="#55565e" stroke="#55565e" stroke-width=".5" stroke-linejoin="round"/></svg>
<svg class="r" style="left:42.30000000000001px;top:102px;" width="13.8" height="10.2" viewBox="0 0 13.800 10.200"><path d="M6.900 .3 v9.600 l-6.600 -4.800 z M13.500 .3 v9.600 l-6.600 -4.800 z" fill="#55565e" stroke="#55565e" stroke-width=".5" stroke-linejoin="round"/></svg>
<svg class="r" style="left:73.5px;top:102px;" width="13.8" height="10.2" viewBox="0 0 13.800 10.200"><path d="M.3 .3 v9.600 l6.600 -4.800 z M6.900 .3 v9.600 l6.600 -4.800 z" fill="#009900" stroke="#009900" stroke-width=".5" stroke-linejoin="round"/></svg>
<svg class="r" style="left:105.10000000000002px;top:102px;" width="8.8" height="10.2" viewBox="0 0 8.800 10.200"><rect x="6.800" y="0" width="2" height="10.200" rx=".4" fill="#009900"/><path d="M.3 .3 v9.600 l6.600 -4.800 z" fill="#009900" stroke="#009900" stroke-width=".5" stroke-linejoin="round"/></svg>
<div class="t" style="top:98px;font-size:13.3px;color:#f07a3c;left:-164.60000000000002px;width:600px;text-align:center;">1</div>
<div class="t" style="top:98px;font-size:13.3px;color:#0b9b0b;left:-137.8px;width:600px;text-align:center;">2</div>
<div class="t" style="top:98px;font-size:13.3px;color:#0b9b0b;left:-112.39999999999998px;width:600px;text-align:center;">3</div>
<div class="t" style="top:98px;font-size:13.3px;color:#0b9b0b;left:-86.80000000000001px;width:600px;text-align:center;">4</div>
<div class="t" style="top:98px;font-size:13.3px;color:#0b9b0b;left:-60.39999999999998px;width:600px;text-align:center;">5</div>
<div class="t" style="top:98px;font-size:13.3px;color:#212529;left:263.3px;">Kpl: <b>181</b></div>
<div class="t" style="top:131px;font-size:13.4px;color:#f07a3c;font-weight:700;letter-spacing:0.174px;left:9.599999999999994px;">Nro</div>
<svg class="r" style="left:40px;top:139.39999999999998px;" width="8.4" height="4.4" viewBox="0 0 8 4.300"><path d="M0 0 h8 l-4 4.3 z" fill="#000"/></svg>
<div class="t" style="top:131px;font-size:13.2px;color:#0b9b0b;font-weight:700;left:115.5px;">Asiakas</div>
<div class="t" style="top:131px;font-size:13.4px;color:#0b9b0b;font-weight:700;letter-spacing:0.189px;left:261px;">Vastaanottop</div>
<div class="t" style="top:131px;font-size:13.4px;color:#0b9b0b;font-weight:700;letter-spacing:-0.195px;left:347.4px;">vm. - Toimituspvm.</div>
<div class="t" style="top:131px;font-size:13.4px;color:#0b9b0b;font-weight:700;letter-spacing:0.25px;left:493px;">Tehtävä</div>
<div class="r" style="left:6px;top:154px;width:773px;height:27px;background:#f2f2f2;border-top:1px solid #dee2e6;"></div>
<div class="t" style="top:158px;font-size:13.0px;color:#0b9b0b;left:9.5px;"><a style="text-decoration:underline;letter-spacing:0.018px">HT20191</a></div>
<div class="t" style="top:158px;font-size:13.3px;color:#212529;left:115.39999999999998px;">Asiakasesittely Oy</div>
<div class="t" style="top:158px;font-size:13.1px;color:#212529;letter-spacing:0.036px;left:261px;">08.05.2019 - 08.05.2019</div>
<div class="t" style="top:158px;font-size:13.4px;color:#212529;letter-spacing:-0.048px;left:493px;">Blu-Ray soitin 3D</div>
<div class="r" style="left:6px;top:181px;width:773px;height:1px;border-top:1px solid #dee2e6;"></div>
<div class="t" style="top:185px;font-size:13.0px;color:#0b9b0b;left:9.5px;"><a style="text-decoration:underline;letter-spacing:0.018px">HT20192</a></div>
<div class="t" style="top:185px;font-size:13.3px;color:#212529;left:115.39999999999998px;">Urakka Yritys Oy</div>
<div class="t" style="top:185px;font-size:13.1px;color:#212529;letter-spacing:0.036px;left:261px;">08.05.2019 - 08.05.2019</div>
<div class="t" style="top:185px;font-size:13.4px;color:#212529;letter-spacing:-0.05px;left:493px;">BCPC001 Kannettava tietokone 17"</div>
<div class="r" style="left:6px;top:208px;width:773px;height:27px;background:#f2f2f2;border-top:1px solid #dee2e6;"></div>
<div class="t" style="top:212px;font-size:13.0px;color:#0b9b0b;left:9.5px;"><a style="text-decoration:underline;letter-spacing:0.018px">HT20193</a></div>
<div class="t" style="top:212px;font-size:13.3px;color:#212529;letter-spacing:0.2px;left:115.39999999999998px;">Toimittaja Oy Ab</div>
<div class="t" style="top:212px;font-size:13.1px;color:#212529;letter-spacing:0.036px;left:261px;">08.05.2019 - 08.05.2019</div>
<div class="t" style="top:212px;font-size:13.4px;color:#212529;letter-spacing:0.285px;left:493px;">Virtasuutin</div>
<div class="r" style="left:6px;top:235px;width:773px;height:1px;border-top:1px solid #dee2e6;"></div>
<div class="t" style="top:239px;font-size:13.0px;color:#0b9b0b;left:9.5px;"><a style="text-decoration:underline;letter-spacing:0.018px">HT20195</a></div>
<div class="t" style="top:239px;font-size:13.3px;color:#212529;letter-spacing:-0.157px;left:115.39999999999998px;">Asiakas Yritys Oy</div>
<div class="t" style="top:239px;font-size:13.1px;color:#212529;letter-spacing:0.036px;left:261px;">08.05.2019 - 21.05.2019</div>
<div class="t" style="top:239px;font-size:13.4px;color:#212529;letter-spacing:0.105px;left:493px;">Alpha 5000 55-210 mm järjestelmäkamera</div>
<div class="r" style="left:6px;top:262px;width:773px;height:27px;background:#f2f2f2;border-top:1px solid #dee2e6;"></div>
<div class="t" style="top:266px;font-size:13.0px;color:#0b9b0b;left:9.5px;"><a style="text-decoration:underline;letter-spacing:0.018px">HT20196</a></div>
<div class="t" style="top:266px;font-size:13.3px;color:#212529;letter-spacing:-0.073px;left:115.39999999999998px;">Data Ky</div>
<div class="t" style="top:266px;font-size:13.1px;color:#212529;letter-spacing:0.036px;left:261px;">02.05.2019 - 07.05.2019</div>
<div class="t" style="top:266px;font-size:13.4px;color:#212529;letter-spacing:-0.137px;left:493px;">Colour LaserJet A3</div>
<div class="r" style="left:6px;top:289px;width:773px;height:1px;border-top:1px solid #dee2e6;"></div>
<div class="t" style="top:293px;font-size:13.0px;color:#0b9b0b;left:9.5px;"><a style="text-decoration:underline;letter-spacing:0.018px">HT20198</a></div>
<div class="t" style="top:293px;font-size:13.3px;color:#212529;letter-spacing:0.168px;left:115.39999999999998px;">Lumi Hankinen Oy</div>
<div class="t" style="top:293px;font-size:13.1px;color:#212529;letter-spacing:0.036px;left:261px;">10.01.2023 - 07.02.2023</div>
<div class="t" style="top:293px;font-size:13.4px;color:#212529;letter-spacing:0.318px;left:493px;">3D projektori</div>
<div class="r" style="left:6px;top:316px;width:773px;height:27px;background:#f2f2f2;border-top:1px solid #dee2e6;"></div>
<div class="t" style="top:320px;font-size:13.0px;color:#0b9b0b;left:9.5px;"><a style="text-decoration:underline;letter-spacing:0.087px">HT201910</a></div>
<div class="t" style="top:320px;font-size:13.1px;color:#212529;letter-spacing:0.228px;left:261px;">08.04.2023 -</div>
<div class="r" style="left:6px;top:343px;width:773px;height:1px;border-top:1px solid #dee2e6;"></div>
<div class="t" style="top:347px;font-size:13.0px;color:#0b9b0b;left:9.5px;"><a style="text-decoration:underline;letter-spacing:0.087px">HT201912</a></div>
<div class="t" style="top:347px;font-size:13.3px;color:#212529;letter-spacing:0.045px;left:115.39999999999998px;">Demo Yritys Oy</div>
<div class="t" style="top:347px;font-size:13.1px;color:#212529;letter-spacing:0.036px;left:261px;">15.04.2019 - 16.04.2019</div>
<div class="t" style="top:347px;font-size:13.4px;color:#212529;letter-spacing:0.46px;left:493px;">Huoltotuote</div>
<div class="r" style="left:6px;top:370px;width:773px;height:27px;background:#f2f2f2;border-top:1px solid #dee2e6;"></div>
<div class="t" style="top:374px;font-size:13.0px;color:#0b9b0b;left:9.5px;"><a style="text-decoration:underline;letter-spacing:0.087px">HT201914</a></div>
<div class="t" style="top:374px;font-size:13.3px;color:#212529;letter-spacing:0.251px;left:115.39999999999998px;">Toimistotukku Ky</div>
<div class="t" style="top:374px;font-size:13.1px;color:#212529;letter-spacing:0.036px;left:261px;">10.05.2019 - 13.05.2019</div>
<div class="t" style="top:374px;font-size:13.4px;color:#212529;letter-spacing:0.46px;left:493px;">Huoltotuote</div>
<div class="r" style="left:6px;top:397px;width:773px;height:1px;border-top:1px solid #dee2e6;"></div>
<div class="t" style="top:401px;font-size:13.0px;color:#0b9b0b;left:9.5px;"><a style="text-decoration:underline;letter-spacing:0.087px">HT201916</a></div>
<div class="t" style="top:401px;font-size:13.3px;color:#212529;letter-spacing:0.045px;left:115.39999999999998px;">Demo Yritys Oy</div>
<div class="t" style="top:401px;font-size:13.1px;color:#212529;letter-spacing:0.036px;left:261px;">21.08.2019 - 21.08.2019</div>
<div class="t" style="top:401px;font-size:13.4px;color:#212529;letter-spacing:-0.048px;left:493px;">Blu-Ray soitin 3D</div>
<div class="r" style="left:6px;top:424px;width:773px;height:27px;background:#f2f2f2;border-top:1px solid #dee2e6;"></div>
<div class="t" style="top:428px;font-size:13.0px;color:#0b9b0b;left:9.5px;"><a style="text-decoration:underline;letter-spacing:0.087px">HT201918</a></div>
<div class="t" style="top:428px;font-size:13.3px;color:#212529;letter-spacing:0.063px;left:115.39999999999998px;">Firma Oy Ab</div>
<div class="t" style="top:428px;font-size:13.1px;color:#212529;letter-spacing:0.036px;left:261px;">01.10.2018 - 01.10.2018</div>
<div class="t" style="top:428px;font-size:13.4px;color:#212529;letter-spacing:0.46px;left:493px;">Huoltotuote</div>
<div class="r" style="left:6px;top:451px;width:773px;height:1px;border-top:1px solid #dee2e6;"></div>
<div class="t" style="top:455px;font-size:13.0px;color:#0b9b0b;left:9.5px;"><a style="text-decoration:underline;letter-spacing:0.087px">HT201924</a></div>
<div class="t" style="top:455px;font-size:13.3px;color:#212529;letter-spacing:-0.073px;left:115.39999999999998px;">Data Ky</div>
<div class="t" style="top:455px;font-size:13.1px;color:#212529;letter-spacing:0.036px;left:261px;">13.01.2020 - 19.01.2021</div>
<div class="t" style="top:455px;font-size:13.4px;color:#212529;letter-spacing:0.196px;left:493px;">Asennustyöt</div>
<div class="r" style="left:6px;top:478px;width:773px;height:27px;background:#f2f2f2;border-top:1px solid #dee2e6;"></div>
<div class="t" style="top:482px;font-size:13.0px;color:#0b9b0b;left:9.5px;"><a style="text-decoration:underline;letter-spacing:0.087px">HT201927</a></div>
<div class="t" style="top:482px;font-size:13.1px;color:#212529;letter-spacing:0.036px;left:261px;">29.10.2022 - 19.01.2022</div>
<div class="t" style="top:482px;font-size:13.4px;color:#212529;letter-spacing:0.46px;left:493px;">Huoltotuote</div>
<div class="r" style="left:6px;top:505px;width:773px;height:1px;border-top:1px solid #dee2e6;"></div>
<div class="t" style="top:509px;font-size:13.0px;color:#0b9b0b;left:9.5px;"><a style="text-decoration:underline;letter-spacing:0.087px">HT201928</a></div>
<div class="t" style="top:509px;font-size:13.3px;color:#212529;letter-spacing:0.229px;left:115.39999999999998px;">Internet Putiikki Oy</div>
<div class="t" style="top:509px;font-size:13.1px;color:#212529;letter-spacing:0.036px;left:261px;">30.10.2019 - 23.10.2019</div>
<div class="t" style="top:509px;font-size:13.4px;color:#212529;letter-spacing:0.044px;left:493px;">Huolto A1</div>
<div class="r" style="left:6px;top:532px;width:773px;height:27px;background:#f2f2f2;border-top:1px solid #dee2e6;"></div>
<div class="t" style="top:536px;font-size:13.0px;color:#0b9b0b;left:9.5px;"><a style="text-decoration:underline;letter-spacing:0.087px">HT201931</a></div>
<div class="t" style="top:536px;font-size:13.3px;color:#212529;letter-spacing:0.251px;left:115.39999999999998px;">Toimistotukku Ky</div>
<div class="t" style="top:536px;font-size:13.1px;color:#212529;letter-spacing:0.036px;left:261px;">03.01.2023 - 01.02.2023</div>
<div class="t" style="top:536px;font-size:13.4px;color:#212529;letter-spacing:0.46px;left:493px;">Huoltotuote</div>
<div class="r" style="left:6px;top:559px;width:773px;height:1px;border-top:1px solid #dee2e6;"></div>
<div class="t" style="top:563px;font-size:13.0px;color:#0b9b0b;left:9.5px;"><a style="text-decoration:underline;letter-spacing:0.087px">HT201932</a></div>
<div class="t" style="top:563px;font-size:13.3px;color:#212529;letter-spacing:0.229px;left:115.39999999999998px;">Internet Putiikki Oy</div>
<div class="t" style="top:563px;font-size:13.1px;color:#212529;letter-spacing:0.036px;left:261px;">07.01.2020 - 07.01.2020</div>
<div class="t" style="top:563px;font-size:13.4px;color:#212529;letter-spacing:0.05px;left:493px;">Pöytä ja 4 tuolia</div>
<div class="r" style="left:6px;top:586px;width:773px;height:27px;background:#f2f2f2;border-top:1px solid #dee2e6;"></div>
<div class="t" style="top:590px;font-size:13.0px;color:#0b9b0b;left:9.5px;"><a style="text-decoration:underline;letter-spacing:0.087px">HT201935</a></div>
<div class="t" style="top:590px;font-size:13.3px;color:#212529;letter-spacing:0.229px;left:115.39999999999998px;">Internet Putiikki Oy</div>
<div class="t" style="top:590px;font-size:13.1px;color:#212529;letter-spacing:0.036px;left:261px;">20.01.2020 - 20.01.2020</div>
<div class="t" style="top:590px;font-size:13.4px;color:#212529;letter-spacing:0.46px;left:493px;">Huoltotuote</div>
<div class="r" style="left:784px;top:123px;width:15px;height:477px;background:#fafafa;"></div>
<svg class="r" style="left:787px;top:127.80000000000001px;" width="9.2" height="7" viewBox="0 0 9.200 7"><path d="M4.600 .4 L8.800 6.600 H.4 z" fill="#8b8b8b" stroke="#8b8b8b" stroke-width=".8" stroke-linejoin="round"/></svg>
<svg class="r" style="left:787px;top:588px;" width="9.2" height="7" viewBox="0 0 9.200 7"><path d="M4.600 6.600 L8.800 .4 H.4 z" fill="#8b8b8b" stroke="#8b8b8b" stroke-width=".8" stroke-linejoin="round"/></svg>
<div class="r" style="left:787px;top:141px;width:9px;height:294px;background:#8b8b8b;border-radius:4.5px;"></div>
<div class="r" style="left:348px;top:88px;width:113px;height:282px;background:#fff;border:1px solid #767676;"></div>
<div class="t" style="top:91px;font-size:11.3px;color:#1f1f1f;font-weight:700;letter-spacing:0.194px;left:357.79999999999995px;">Projekti</div>
<div class="t" style="top:112px;font-size:11.3px;color:#2b2b2b;letter-spacing:0.443px;left:375.6px;">Omat</div>
<div class="t" style="top:136px;font-size:11.3px;color:#2b2b2b;letter-spacing:0.341px;left:375.6px;">Aloitetut</div>
<div class="t" style="top:160px;font-size:11.3px;color:#2b2b2b;letter-spacing:0.291px;left:375.6px;">Valmiit</div>
<div class="t" style="top:184px;font-size:11.3px;color:#2b2b2b;letter-spacing:-0.099px;left:375.6px;">Voimassa</div>
<div class="t" style="top:208px;font-size:11.3px;color:#2b2b2b;letter-spacing:0.306px;left:375.6px;">Peruutettu</div>
<div class="t" style="top:231px;font-size:11.3px;color:#1f1f1f;font-weight:700;letter-spacing:0.045px;left:357.79999999999995px;">Sovellukset</div>
<div class="t" style="top:252px;font-size:11.3px;color:#2b2b2b;letter-spacing:0.264px;left:375.6px;">Myyntitilaus</div>
<div class="t" style="top:276px;font-size:11.3px;color:#2b2b2b;letter-spacing:0.186px;left:375.6px;">Ostotilaus</div>
<div class="r" style="left:349px;top:297.2px;width:111px;height:24px;background:#1967d2;"></div>
<div class="t" style="top:300px;font-size:11.3px;color:#fff;letter-spacing:0.473px;left:375.6px;">Huolto</div>
<div class="t" style="top:324px;font-size:11.3px;color:#2b2b2b;letter-spacing:0.264px;left:375.6px;">Tuotanto</div>
<div class="t" style="top:348px;font-size:11.3px;color:#2b2b2b;letter-spacing:0.276px;left:375.6px;">Tuotekortti</div>
<div class="r" style="left:0px;top:0px;width:800px;height:600px;border:1px solid #dfe3e7;"></div>
</div>
</body></html>
